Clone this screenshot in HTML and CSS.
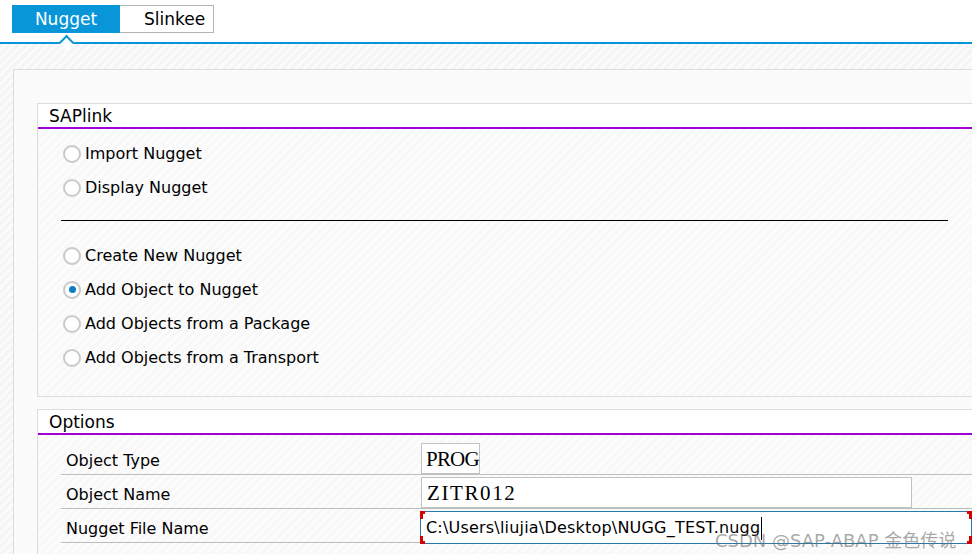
FILE: index.html
```html
<!DOCTYPE html>
<html>
<head>
    <meta charset="utf-8"/>
    <title>SAPlink</title>
    <link rel="stylesheet" href="styles.css">
</head>
<body>
    <div class="tabs">
        <div class="tab tab-on">Nugget</div>
        <div class="tab tab-off">Slinkee</div>
    </div>
    <div class="tabline"><span class="notch"></span></div>
    <div class="main">
        <div class="panel">
            <div class="group">
                <div class="group-head">SAPlink</div>
                <div class="group-body radios">
                    <div class="radio"><i class="dot"></i>Import Nugget</div>
                    <div class="radio"><i class="dot"></i>Display Nugget</div>
                    <div class="sep"></div>
                    <div class="radio"><i class="dot"></i>Create New Nugget</div>
                    <div class="radio"><i class="dot dot-on"></i>Add Object to Nugget</div>
                    <div class="radio"><i class="dot"></i>Add Objects from a Package</div>
                    <div class="radio"><i class="dot"></i>Add Objects from a Transport</div>
                </div>
            </div>
            <div class="group group2">
                <div class="group-head">Options</div>
                <div class="group-body opts">
                    <div class="row">
                        <label>Object Type</label>
                        <div class="field f-type">PROG</div>
                    </div>
                    <div class="row">
                        <label>Object Name</label>
                        <div class="field f-name">ZITR012</div>
                    </div>
                    <div class="row">
                        <label>Nugget File Name</label>
                        <div class="field f-file">C:\Users\liujia\Desktop\NUGG_TEST.nugg<span class="caret"></span>
                            <i class="mk mk-tl"></i><i class="mk mk-bl"></i><i class="mk mk-tr"></i><i class="mk mk-br"></i>
                        </div>
                    </div>
                </div>
            </div>
        </div>
    </div>
    <div class="wm">CSDN @SAP-ABAP 金色传说</div>
</body>
</html>
```

FILE: styles.css
```css
html,body,div,p{margin:0;padding:0;}
*{box-sizing:border-box;}
body{width:972px;height:554px;overflow:hidden;position:relative;font-family:"DejaVu Sans","Noto Sans CJK SC",sans-serif;font-size:15px;color:#000;background:#fff;}
.tabs{display:flex;padding:5px 0 0 12px;height:33px;}
.tab{height:28px;line-height:27px;border:1px solid #b4b4b4;font-size:17px;}
.tab-on{width:108px;background:#0996d8;border-color:#0996d8;color:#fff;text-align:center;}
.tab-off{width:94px;padding-left:24px;border-left:0;}
.tabline{margin-top:9px;height:2px;background:#0996d8;position:relative;}
.notch{position:absolute;left:61px;top:-5px;width:11px;height:11px;background:#fff;border-top:2px solid #0996d8;border-left:2px solid #0996d8;transform:rotate(45deg);}
.main{height:510px;overflow:hidden;padding:25px 0 0 13px;background:repeating-linear-gradient(135deg,#f5f4f7 0 3px,#fbfbfc 3px 6px);}
.panel{width:959px;height:485px;overflow:hidden;padding:33px 0 0 23px;border:1px solid #dedede;border-right:0;border-bottom:0;background:#fbfbfb;}
.group{width:935px;border:1px solid #dcdcdc;border-right:0;background:repeating-linear-gradient(135deg,#f8f8f9 0 3px,#fcfcfc 3px 6px);}
.group2{margin-top:12px;border-bottom:0;}
.group-head{height:25px;line-height:25px;padding-left:11px;background:#fff;border-bottom:2px solid #a100d6;font-size:17px;}
.radios{padding:7px 0 22px 25px;}
.radio{height:34px;display:flex;align-items:center;font-size:16px;padding-top:1px;}
.dot{width:18px;height:18px;margin-right:4px;border:2px solid #c9c9c9;border-radius:50%;background:#fff;display:flex;align-items:center;justify-content:center;}
.dot-on:after{content:"";width:7px;height:7px;border-radius:50%;background:#0a7fc4;}
.sep{height:1px;width:887px;margin:16px 0 17px -2px;background:#000;}
.opts{padding:6px 0 20px 23px;}
.row{height:34px;display:flex;align-items:flex-end;border-bottom:1px solid #bdbdbd;}
.row label{width:360px;align-self:center;padding:5px 0 0 5px;font-size:16px;}
.field{height:31px;border:1px solid #c2c2c2;background:#fff;padding-left:5px;line-height:31px;font-family:"Liberation Serif",serif;font-size:21px;}
.f-type{width:59px;letter-spacing:-0.8px;padding-left:4px;}
.f-name{width:491px;letter-spacing:1.6px;}
.f-file{position:relative;width:552px;height:33px;margin-bottom:-2px;margin-left:-1px;border-color:#2a77aa;font-family:"DejaVu Sans","Noto Sans CJK SC",sans-serif;font-size:16px;letter-spacing:0.2px;line-height:32px;}
.caret{display:inline-block;width:1px;height:23px;background:#000;vertical-align:middle;margin-left:1px;}
.mk{position:absolute;width:5px;height:8px;border:0 solid #d40000;}
.mk-tl{left:-1px;top:-1px;border-width:3px 0 0 3px;}
.mk-bl{left:-1px;bottom:-1px;border-width:0 0 3px 3px;}
.mk-tr{right:-1px;top:-1px;border-width:3px 3px 0 0;}
.mk-br{right:-1px;bottom:-1px;border-width:0 3px 3px 0;}
.wm{position:absolute;left:715px;top:526px;font-family:"DejaVu Sans","Noto Sans CJK SC",sans-serif;font-size:18px;color:rgba(110,110,110,0.6);}
```
